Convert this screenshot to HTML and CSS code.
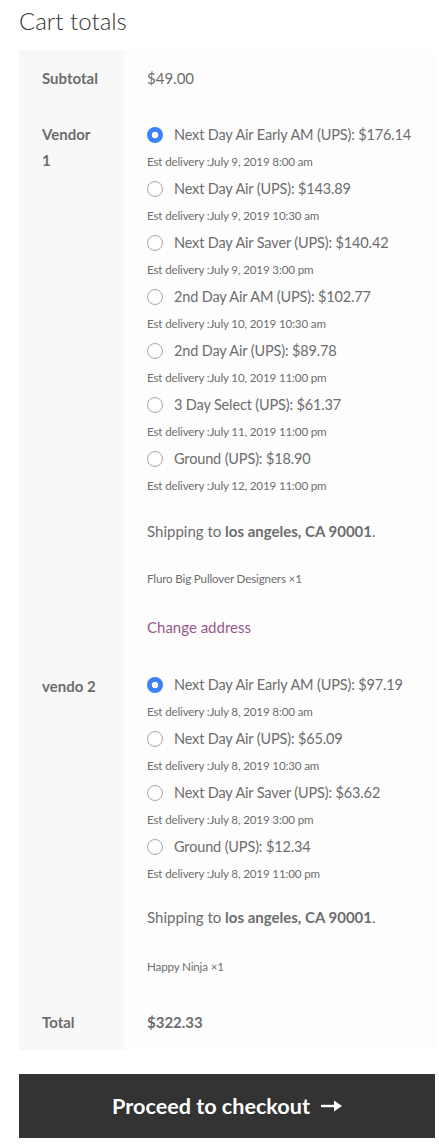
FILE: index.html
```html
<!DOCTYPE html>
<html>
<head>
<meta charset="utf-8">
<link rel="stylesheet" href="styles.css">
</head>
<body>
<div class="cart-totals">
  <h2 class="title">Cart totals</h2>
  <table class="totals">
    <tr>
      <th>Subtotal</th>
      <td>$49.00</td>
    </tr>
    <tr class="ship-row">
      <th>Vendor 1</th>
      <td>
        <ul class="methods">
          <li><label><span class="radio checked"></span>Next Day Air Early AM (UPS): $176.14</label><div class="est">Est delivery :July 9, 2019 8:00 am</div></li>
          <li><label><span class="radio"></span>Next Day Air (UPS): $143.89</label><div class="est">Est delivery :July 9, 2019 10:30 am</div></li>
          <li><label><span class="radio"></span>Next Day Air Saver (UPS): $140.42</label><div class="est">Est delivery :July 9, 2019 3:00 pm</div></li>
          <li><label><span class="radio"></span>2nd Day Air AM (UPS): $102.77</label><div class="est">Est delivery :July 10, 2019 10:30 am</div></li>
          <li><label><span class="radio"></span>2nd Day Air (UPS): $89.78</label><div class="est">Est delivery :July 10, 2019 11:00 pm</div></li>
          <li><label><span class="radio"></span>3 Day Select (UPS): $61.37</label><div class="est">Est delivery :July 11, 2019 11:00 pm</div></li>
          <li><label><span class="radio"></span>Ground (UPS): $18.90</label><div class="est">Est delivery :July 12, 2019 11:00 pm</div></li>
        </ul>
        <p class="dest">Shipping to <strong>los angeles, CA 90001</strong>.</p>
        <p class="pkg">Fluro Big Pullover Designers ×1</p>
        <p class="change"><a href="#">Change address</a></p>
      </td>
    </tr>
    <tr class="ship-row second">
      <th>vendo 2</th>
      <td>
        <ul class="methods">
          <li><label><span class="radio checked"></span>Next Day Air Early AM (UPS): $97.19</label><div class="est">Est delivery :July 8, 2019 8:00 am</div></li>
          <li><label><span class="radio"></span>Next Day Air (UPS): $65.09</label><div class="est">Est delivery :July 8, 2019 10:30 am</div></li>
          <li><label><span class="radio"></span>Next Day Air Saver (UPS): $63.62</label><div class="est">Est delivery :July 8, 2019 3:00 pm</div></li>
          <li><label><span class="radio"></span>Ground (UPS): $12.34</label><div class="est">Est delivery :July 8, 2019 11:00 pm</div></li>
        </ul>
        <p class="dest">Shipping to <strong>los angeles, CA 90001</strong>.</p>
        <p class="pkg last">Happy Ninja ×1</p>
      </td>
    </tr>
    <tr class="total-row">
      <th>Total</th>
      <td><strong>$322.33</strong></td>
    </tr>
  </table>
  <a class="checkout" href="#">Proceed to checkout <svg class="arrow" width="21" height="12" viewBox="0 0 21 12"><path d="M0 4.8h14v2.4H0z" fill="#fff"/><path d="M13 0.5L21 6l-8 5.5z" fill="#fff"/></svg></a>
</div>
</body>
</html>
```
FILE: styles.css
```css
html, body {
  margin: 0;
  padding: 0;
  background: #ffffff;
}
body {
  font-family: "Lato", "Liberation Sans", sans-serif;
  color: #6d6d6d;
  font-size: 15px;
}
.cart-totals {
  width: 416px;
  margin-left: 19px;
}
.title {
  margin: 0;
  font-size: 24px;
  font-weight: 300;
  color: #333333;
  line-height: 40px;
  height: 50px;
  box-sizing: border-box;
  padding-top: 1px;
}
.totals {
  width: 100%;
  border-collapse: collapse;
  border-spacing: 0;
}
.totals th {
  width: 105px;
  box-sizing: border-box;
  background: #f8f8f8;
  text-align: left;
  vertical-align: top;
  font-weight: 700;
  padding: 16px 23px;
  line-height: 24px;
}
.totals td {
  background: #fdfdfd;
  vertical-align: top;
  padding: 16px 23px;
  line-height: 24px;
}
.ship-row th {
  line-height: 26px;
  padding-top: 15px;
}
.ship-row td {
  padding-top: 17px;
}
.ship-row.second td,
.ship-row.second th {
  padding-top: 18px;
}
.methods {
  list-style: none;
  margin: 0;
  padding: 0;
}
.methods li {
  height: 54px;
}
.methods label {
  display: flex;
  align-items: center;
  height: 24px;
  font-size: 14.5px;
  letter-spacing: -0.15px;
  white-space: nowrap;
}
.radio {
  width: 14px;
  height: 14px;
  border: 1px solid #a8a8a8;
  border-radius: 50%;
  background: #fff;
  margin-right: 11px;
  flex: none;
  box-sizing: content-box;
}
.radio.checked {
  width: 16px;
  height: 16px;
  border: none;
  background: radial-gradient(circle, #ffffff 0 3px, #3b82f6 3.6px);
}
.est {
  font-size: 11.6px;
  letter-spacing: -0.15px;
  line-height: 22px;
  padding-top: 4px;
}
.dest {
  margin: 18px 0 0;
  line-height: 24px;
}
.dest strong {
  font-weight: 700;
}
.pkg {
  margin: 26px 0 0;
  font-size: 11.6px;
  letter-spacing: -0.15px;
  line-height: 20px;
}
.pkg.last {
  margin-top: 28px;
  margin-bottom: 2px;
}
.change {
  margin: 26px 0 0;
  line-height: 24px;
}
.change a {
  color: #96588a;
  text-decoration: none;
}
.second .dest {
  margin-top: 16px;
}
.total-row th, .total-row td {
  padding-top: 15px;
  padding-bottom: 16px;
}
.checkout {
  display: flex;
  align-items: center;
  justify-content: center;
  margin-top: 24px;
  height: 64px;
  background: #333333;
  color: #ffffff;
  font-weight: 700;
  font-size: 21.6px;
  text-decoration: none;
}
.arrow {
  margin-left: 11px;
  flex: none;
}
```
